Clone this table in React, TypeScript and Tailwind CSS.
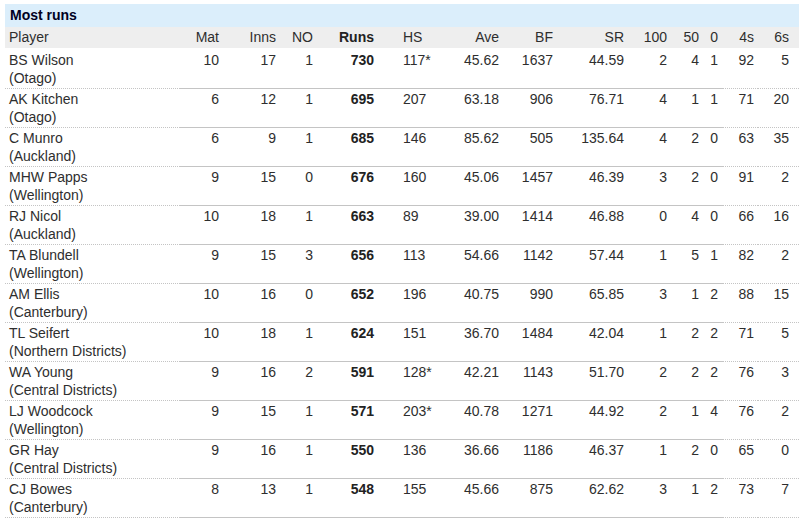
const rows = [
  ["BS Wilson", "Otago", "10", "17", "1", "730", "117*", "45.62", "1637", "44.59", "2", "4", "1", "92", "5"],
  ["AK Kitchen", "Otago", "6", "12", "1", "695", "207", "63.18", "906", "76.71", "4", "1", "1", "71", "20"],
  ["C Munro", "Auckland", "6", "9", "1", "685", "146", "85.62", "505", "135.64", "4", "2", "0", "63", "35"],
  ["MHW Papps", "Wellington", "9", "15", "0", "676", "160", "45.06", "1457", "46.39", "3", "2", "0", "91", "2"],
  ["RJ Nicol", "Auckland", "10", "18", "1", "663", "89", "39.00", "1414", "46.88", "0", "4", "0", "66", "16"],
  ["TA Blundell", "Wellington", "9", "15", "3", "656", "113", "54.66", "1142", "57.44", "1", "5", "1", "82", "2"],
  ["AM Ellis", "Canterbury", "10", "16", "0", "652", "196", "40.75", "990", "65.85", "3", "1", "2", "88", "15"],
  ["TL Seifert", "Northern Districts", "10", "18", "1", "624", "151", "36.70", "1484", "42.04", "1", "2", "2", "71", "5"],
  ["WA Young", "Central Districts", "9", "16", "2", "591", "128*", "42.21", "1143", "51.70", "2", "2", "2", "76", "3"],
  ["LJ Woodcock", "Wellington", "9", "15", "1", "571", "203*", "40.78", "1271", "44.92", "2", "1", "4", "76", "2"],
  ["GR Hay", "Central Districts", "9", "16", "1", "550", "136", "36.66", "1186", "46.37", "1", "2", "0", "65", "0"],
  ["CJ Bowes", "Canterbury", "8", "13", "1", "548", "155", "45.66", "875", "62.62", "3", "1", "2", "73", "7"],
];

const headers = ["Mat", "Inns", "NO", "Runs", "HS", "Ave", "BF", "SR", "100", "50", "0", "4s", "6s"];

// cell classes per stat column (index 0 = Mat)
const statCell = (i: number) => {
  if (i === 4) return "text-left pl-[25px]";
  if (i === 12) return "text-right pr-[10px]";
  return "text-right pr-1";
};

const lineCell = (i: number) => (i >= 11 ? "border-dotted" : "border-solid");

export default function App() {
  return (
    <div className="bg-white w-[799px] h-[520px] overflow-hidden pt-1 pl-[5px] text-[#2e2e2e] text-[14px]" style={{ fontFamily: '"Liberation Sans", Arial, sans-serif' }}>
      <div className="bg-[#dbeefb] h-[23px] pl-[5px] leading-[23px] font-bold text-[#000022]">Most runs</div>
      <table className="table-fixed border-collapse w-[794px]">
        <colgroup>
          <col className="w-[175px]" />
          <col className="w-[43px]" />
          <col className="w-[57px]" />
          <col className="w-[37px]" />
          <col className="w-[61px]" />
          <col className="w-[62px]" />
          <col className="w-[63px]" />
          <col className="w-[54px]" />
          <col className="w-[71px]" />
          <col className="w-[43px]" />
          <col className="w-[32px]" />
          <col className="w-[19px]" />
          <col className="w-[36px]" />
          <col className="w-[41px]" />
        </colgroup>
        <thead>
          <tr className="bg-[#eeeeee] h-[21px] border-b-2 border-white">
            <th className="text-left pl-1 font-normal leading-[21px]">Player</th>
            {headers.map((h, i) => (
              <th key={h} className={`${statCell(i)} leading-[21px] ${h === "Runs" ? "font-bold text-[#222]" : "font-normal"}`}>
                {h}
              </th>
            ))}
          </tr>
        </thead>
        <tbody>
          {rows.map((r) => (
            <tr key={r[0]} className="h-[39px]">
              <td className="align-top pl-1 pt-[1px] leading-[18px] border-b border-dotted border-[#c4c4c4]">
                <div>{r[0]}</div>
                <div>({r[1]})</div>
              </td>
              {r.slice(2).map((v, i) => (
                <td
                  key={i}
                  className={`align-top pt-[1px] leading-[18px] border-b border-[#c4c4c4] ${lineCell(i)} ${statCell(i)} ${i === 3 ? "font-bold text-[#222]" : ""}`}
                >
                  {v}
                </td>
              ))}
            </tr>
          ))}
        </tbody>
      </table>
    </div>
  );
}
